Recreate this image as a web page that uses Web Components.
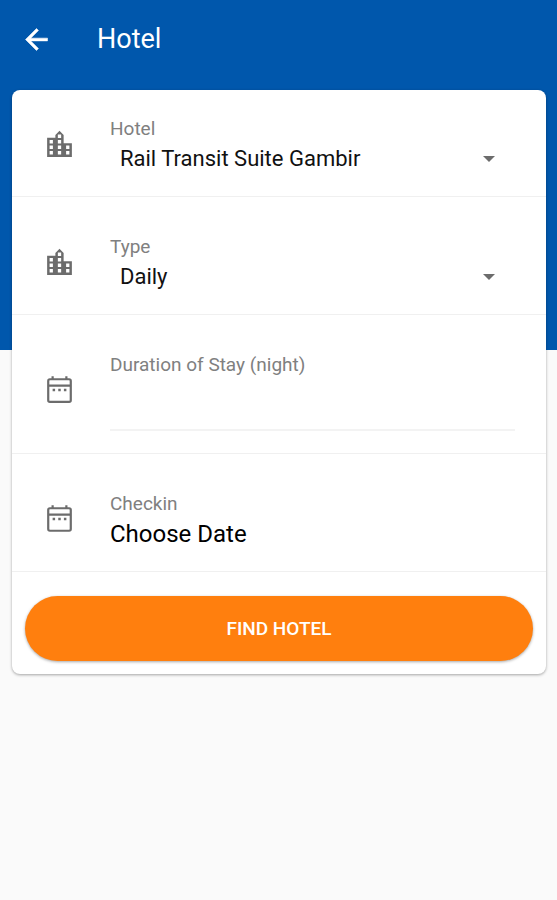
<!DOCTYPE html>
<html lang="en">
<head>
<meta charset="utf-8">
<meta name="viewport" content="width=device-width, initial-scale=1">
<title>Hotel</title>
<style>
  body { margin: 0; min-height: 100vh; background: #fafafa; font-family: Roboto, "Liberation Sans", sans-serif; color: #111; }
</style>
</head>
<body>
<hotel-search-page></hotel-search-page>
<script>
const ICONS = {
  back: '<path d="M20 11H7.83l5.59-5.59L12 4l-8 8 8 8 1.41-1.41L7.83 13H20v-2z" fill="currentColor" stroke="currentColor" stroke-width=".4"/>',
  city: '<path fill="currentColor" fill-rule="evenodd" d="M15 11V5l-3-3-3 3v2H3v14h18V11h-6zM4.8 8.8v2.4h2.4V8.8zM4.8 12.8v2.4h2.4v-2.4zM4.8 16.8v2.4h2.4v-2.4zM10.8 4.8v2.4h2.4V4.8zM10.8 8.8v2.4h2.4V8.8zM10.8 12.8v2.4h2.4v-2.4zM10.8 16.8v2.4h2.4v-2.4zM16.8 12.8v2.4h2.4v-2.4zM16.8 16.8v2.4h2.4v-2.4z"/>',
  calendar: '<g fill="none" stroke="currentColor" stroke-width="1.6"><rect x="3.8" y="3.8" width="16.4" height="16.4" rx="1.2"/><path d="M3.8 8.5h16.4M7 1.7v2.2M17 1.7v2.2"/></g><path fill="currentColor" d="M7 10.7h1.8v1.8H7zM11.1 10.7h1.8v1.8h-1.8zM15.2 10.7H17v1.8h-1.8z"/>'
};

class UiIcon extends HTMLElement {
  connectedCallback() {
    const root = this.attachShadow({ mode: "open" });
    root.innerHTML = `<style>
      :host { display: block; width: 33px; height: 33px; flex: none; }
      svg { display: block; width: 100%; height: 100%; }
    </style><svg viewBox="0 0 24 24" aria-hidden="true">${ICONS[this.getAttribute("name")]}</svg>`;
  }
}
customElements.define("ui-icon", UiIcon);

class AppHeader extends HTMLElement {
  connectedCallback() {
    const root = this.attachShadow({ mode: "open" });
    root.innerHTML = `<style>
      :host { display: block; background: #0057ac; color: #fff; padding-bottom: 272px; }
      header { display: flex; align-items: center; gap: 44px; height: 78px; padding: 0 20px; }
      button { appearance: none; border: 0; margin: 0; padding: 0; background: none; color: inherit; cursor: pointer; }
      h1 { margin: 0; font-size: 27px; line-height: 34px; font-weight: 400; }
    </style>
    <header><button type="button" aria-label="Back"><ui-icon name="back"></ui-icon></button><h1><slot></slot></h1></header>`;
  }
}
customElements.define("app-header", AppHeader);

class FormField extends HTMLElement {
  connectedCallback() {
    const kind = this.getAttribute("kind");
    const value = this.getAttribute("value") || "";
    const control = {
      select: `<div class="select"><select id="control"><option>${value}</option></select>
        <svg viewBox="0 0 12 6" aria-hidden="true"><path d="M0 0h12L6 6z"/></svg></div>`,
      number: `<input id="control" type="text" inputmode="numeric">`,
      date: `<button id="control" type="button">${value}</button>`
    }[kind];
    const root = this.attachShadow({ mode: "open" });
    root.innerHTML = `<style>
      :host { display: flex; align-items: center; gap: 34px; padding: 35px 31px 22px; border-bottom: 1px solid #f0f0f0; }
      :host(:first-child) { padding-top: 24px; }
      ui-icon { color: #6c6c6c; }
      .content { flex: 1; min-width: 0; }
      label { display: block; font-size: 19px; line-height: 30px; color: #808080; }
      select, input, button { display: block; box-sizing: border-box; width: 100%; height: 30px; margin: 0; padding: 0; border: 0; border-radius: 0; background: none; appearance: none; font: inherit; color: inherit; text-align: left; outline-offset: 2px; }
      .select { display: grid; grid-template-columns: 1fr 12px 20px; align-items: center; }
      select { grid-area: 1 / 1 / 2 / 4; padding-left: 10px; font-size: 22px; line-height: 30px; }
      svg { grid-area: 1 / 2; width: 12px; height: 6px; fill: #6c6c6c; pointer-events: none; }
      input { height: 51px; font-size: 22px; border-bottom: 2px solid #f3f3f3; }
      button { font-size: 24px; line-height: 30px; color: #000; }
    </style>
    <ui-icon name="${this.getAttribute("icon")}"></ui-icon>
    <div class="content"><label for="control"><slot></slot></label>${control}</div>`;
  }
}
customElements.define("form-field", FormField);

class PrimaryButton extends HTMLElement {
  connectedCallback() {
    const root = this.attachShadow({ mode: "open" });
    root.innerHTML = `<style>
      :host { display: block; padding: 24px 13px 13px; }
      button { display: block; width: 100%; height: 65px; margin: 0; padding: 0; border: 0; border-radius: 33px; background: #ff7f0e; color: #fff; font: 500 19px/24px Roboto, "Liberation Sans", sans-serif; box-shadow: 0 1px 3px rgba(0, 0, 0, .35); cursor: pointer; }
    </style><button type="button"><slot></slot></button>`;
  }
}
customElements.define("primary-button", PrimaryButton);

class SearchCard extends HTMLElement {
  connectedCallback() {
    const root = this.attachShadow({ mode: "open" });
    root.innerHTML = `<style>
      :host { display: block; margin: -260px 11px 24px 12px; background: #fff; border-radius: 8px; box-shadow: 0 1px 3px rgba(0, 0, 0, .35); }
    </style><slot></slot>`;
  }
}
customElements.define("search-card", SearchCard);

class HotelSearchPage extends HTMLElement {
  connectedCallback() {
    const root = this.attachShadow({ mode: "open" });
    root.innerHTML = `<style>
      :host { display: flow-root; }
      search-card { position: relative; }
    </style>
    <app-header>Hotel</app-header>
    <search-card>
      <form-field icon="city" kind="select" value="Rail Transit Suite Gambir">Hotel</form-field>
      <form-field icon="city" kind="select" value="Daily">Type</form-field>
      <form-field icon="calendar" kind="number">Duration of Stay (night)</form-field>
      <form-field icon="calendar" kind="date" value="Choose Date">Checkin</form-field>
      <primary-button>FIND HOTEL</primary-button>
    </search-card>`;
  }
}
customElements.define("hotel-search-page", HotelSearchPage);
</script>
</body>
</html>
